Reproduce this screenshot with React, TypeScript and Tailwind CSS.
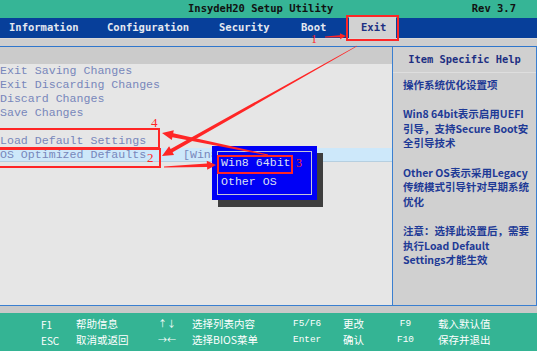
import React from 'react';

const mono = "font-['DejaVu_Sans_Mono',monospace]";
const listFont = "font-['Liberation_Mono',monospace]";
const cjk = "font-['Noto_Sans_CJK_SC',sans-serif]";

type Pt = [number, number];

// tapered arrow, thin at the start, head at the end
function arrowPoints(from: Pt, to: Pt, w0: number, w1: number, headL: number, headW: number) {
  const dx = to[0] - from[0];
  const dy = to[1] - from[1];
  const len = Math.hypot(dx, dy);
  const ux = dx / len;
  const uy = dy / len;
  const nx = -uy;
  const ny = ux;
  const bx = to[0] - ux * headL;
  const by = to[1] - uy * headL;
  const p = (x: number, y: number) => `${x.toFixed(1)},${y.toFixed(1)}`;
  return [
    p(from[0] + (nx * w0) / 2, from[1] + (ny * w0) / 2),
    p(bx + (nx * w1) / 2, by + (ny * w1) / 2),
    p(bx + (nx * headW) / 2, by + (ny * headW) / 2),
    p(to[0], to[1]),
    p(bx - (nx * headW) / 2, by - (ny * headW) / 2),
    p(bx - (nx * w1) / 2, by - (ny * w1) / 2),
    p(from[0] - (nx * w0) / 2, from[1] - (ny * w0) / 2),
  ].join(' ');
}

const menu = [
  { label: 'Information', w: 'w-[98px]' },
  { label: 'Configuration', w: 'w-[112px]' },
  { label: 'Security', w: 'w-[82px]' },
  { label: 'Boot', w: 'w-[48px]' },
];

const items = ['Exit Saving Changes', 'Exit Discarding Changes', 'Discard Changes', 'Save Changes', '', 'Load Default Settings'];

const help: string[] = [
  '操作系统优化设置项',
  '',
  'Win8 64bit表示启用UEFI',
  '引导，支持Secure Boot安',
  '全引导技术',
  '',
  'Other OS表示采用Legacy',
  '传统模式引导针对早期系统',
  '优化',
  '',
  '注意：选择此设置后，需要',
  '执行Load Default',
  'Settings才能生效',
];

const footer = [
  ['F1', '帮助信息', '↑↓', '选择列表内容', 'F5/F6', '更改', 'F9', '载入默认值'],
  ['ESC', '取消或返回', '→←', '选择BIOS菜单', 'Enter', '确认', 'F10', '保存并退出'],
];

export default function App() {
  const red = '#ff2626';
  return (
    <div className="relative w-[537px] h-[351px] overflow-hidden bg-[#e6e6e6] flex flex-col">
      {/* title */}
      <div className={`h-[18px] bg-[#36b596] flex items-center pl-[188px] text-[10.5px] font-bold text-[#111] ${mono}`}>
        <span>InsydeH20 Setup Utility</span>
        <span className="ml-auto mr-[21px]">Rev 3.7</span>
      </div>

      {/* menu */}
      <div className={`h-[20px] bg-[#073f9a] flex items-stretch pl-[9px] text-[10.5px] font-bold text-[#e4e8f0] ${mono}`}>
        {menu.map((m) => (
          <div key={m.label} className={`${m.w} flex items-center`}>
            {m.label}
          </div>
        ))}
        <div className="w-[47px] -mt-[1px] bg-[#d2d2d2] flex items-center pl-[12px] text-[#1d2f82]">Exit</div>
      </div>

      <div className="h-[8px] bg-[#cecece] border-t border-[#d8d8d8]" />
      <div className="h-[1px] bg-[#2f76cc]" />

      {/* main */}
      <div className="h-[258px] flex">
        <div className="w-[392px] flex flex-col">
          <div className="h-[17px] bg-[#cbcbcb]" />
          <div className={`flex flex-col text-[11.6px] text-[#7887bb] ${listFont}`}>
            {items.map((t, i) => (
              <div key={i} className="h-[14px] leading-[14px] whitespace-pre">
                {t}
              </div>
            ))}
            <div className="h-[14px] leading-[14px] bg-[#cde8fa] border-b border-[#b6cfe0] flex whitespace-pre">
              <span className="w-[183px]">OS Optimized Defaults</span>
              <span>[Win8</span>
            </div>
          </div>
        </div>
        <div className="w-[1px] bg-[#3a7fd0]" />
        <div className="flex-1 bg-[#d0d0d0] border-r border-[#3a7fd0] flex flex-col">
          <div className={`h-[26px] flex items-center justify-center text-[10.4px] font-bold text-[#1d2f82] border-b border-[#dedede] ${mono}`}>
            Item Specific Help
          </div>
          <div className={`pt-[5px] pl-[10px] text-[10.5px] font-bold text-[#1e3a96] ${cjk}`}>
            {help.map((t, i) => (
              <div key={i} className="h-[14.6px] leading-[14.6px] whitespace-nowrap">
                {t}
              </div>
            ))}
          </div>
        </div>
      </div>

      <div className="h-[1px] bg-[#3a7fd0]" />
      <div className="h-[7px] bg-[#c9c9c9]" />

      {/* footer */}
      <div className="flex-1 bg-[#34b494] pt-[3px] text-white">
        {footer.map((r, i) => (
          <div
            key={i}
            className="h-[16px] grid grid-cols-[41px_35px_82px_34px_101px_50px_50px_45px_1fr] items-center text-[10.5px]"
          >
            <span />
            <span className={`text-[10px] ${cjk}`}>{r[0]}</span>
            <span className={cjk}>{r[1]}</span>
            <span className={`text-[9px] ${cjk}`}>{r[2]}</span>
            <span className={cjk}>{r[3]}</span>
            <span className={`text-[9.4px] ${listFont}`}>{r[4]}</span>
            <span className={cjk}>{r[5]}</span>
            <span className={`text-[9.4px] text-center pr-[20px] ${listFont}`}>{r[6]}</span>
            <span className={cjk}>{r[7]}</span>
          </div>
        ))}
      </div>

      {/* popup */}
      <div className="absolute left-[212px] top-[146px] w-[105px] h-[54px] bg-[#0000f6] shadow-[6px_7px_0_#3e3e3e]">
        <div className="absolute inset-[5px] border border-[#c4c4d8]" />
        <div className={`relative flex flex-col pt-[10px] pl-[9px] gap-[5px] text-[11.6px] text-[#dde0f2] ${listFont}`}>
          <div className="h-[14px] leading-[14px]">Win8 64bit</div>
          <div className="h-[14px] leading-[14px]">Other OS</div>
        </div>
      </div>

      {/* annotations */}
      <svg className="absolute inset-0 pointer-events-none" width="537" height="351" viewBox="0 0 537 351">
        <g fill="none" stroke={red} strokeWidth="2">
          <rect x="347" y="16" width="51" height="24" />
          <rect x="-1" y="129" width="160" height="19" />
          <rect x="-1" y="149" width="161" height="18" />
          <rect x="218" y="156" width="74" height="17" />
        </g>
        <g fill={red}>
          <polygon points={arrowPoints([325, 37], [346, 36], 1, 2, 6, 6)} />
          <polygon points={arrowPoints([357, 46], [162, 156], 0.6, 4, 11, 10)} />
          <polygon points={arrowPoints([268, 155], [162, 133], 1, 4, 11, 10)} />
          <polygon points={arrowPoints([164, 167], [216, 165], 1, 3.5, 9, 9)} />
        </g>
        <g fill={red} fontFamily="'Liberation Serif', serif">
          <text x="311" y="43" fontSize="12">1</text>
          <text x="151" y="127" fontSize="13">4</text>
          <text x="147" y="162" fontSize="13">2</text>
          <text x="296" y="167" fontSize="12">3</text>
        </g>
      </svg>
    </div>
  );
}
